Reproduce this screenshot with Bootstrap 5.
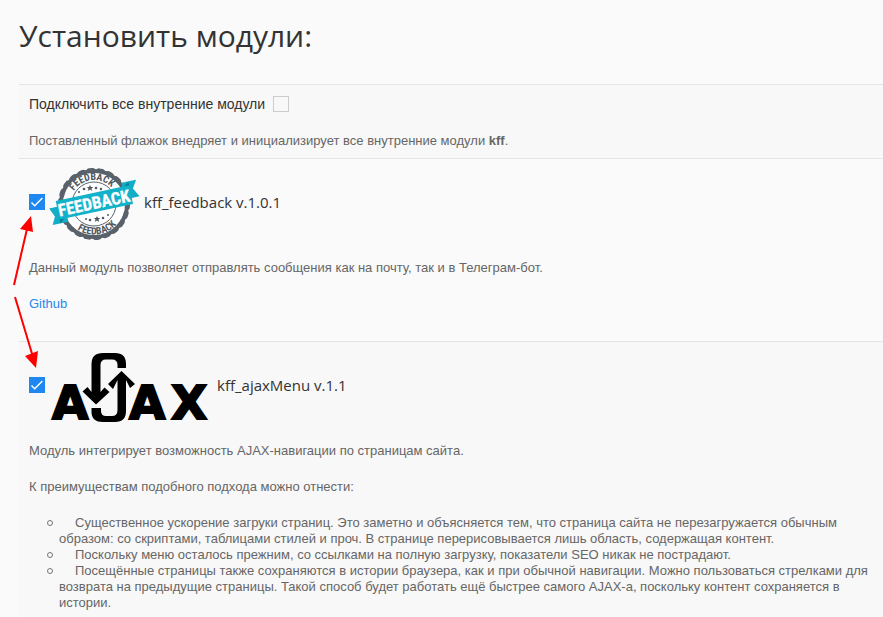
<!DOCTYPE html>
<html lang="ru">
<head>
<meta charset="utf-8">
<meta name="viewport" content="width=device-width, initial-scale=1">
<title>Установить модули</title>
<link href="https://cdn.jsdelivr.net/npm/bootstrap@5.3.0/dist/css/bootstrap.min.css" rel="stylesheet">
<style>
body { background: #fafafa; color: #666; font: 13px/16px "Liberation Sans", Arial, sans-serif; }
.page { padding: 14px 0 0 19px; overflow: hidden; }
h1 { font: 30px/44px "Open Sans", "Noto Sans", sans-serif; color: #333; margin: 0 0 26px; }
.module { border-top: 1px solid #e5e5e5; padding: 10px 10px 9px; }
.module:nth-child(odd) { background: #f8f8f8; }
.module p { margin: 0 0 20px; }
.module > :last-child { margin-bottom: 0; }
.module.with-link > :last-child { margin-bottom: 20px; }
.module label { color: #333; gap: 5px; margin-bottom: 26px; }
.module label svg { margin-bottom: -6px; overflow: visible; flex: none; }
.module .all-label { font-size: 14px; line-height: 18px; margin-bottom: 20px; gap: 8px; }
.module-name { font: 15px/20px "Open Sans", "Noto Sans", sans-serif; }
.form-check-input { width: 16px; height: 16px; margin: 0; border: 1px solid #ccc; background-color: transparent; flex: none; }
.form-check-input[type=checkbox] { border-radius: 0; }
.form-check-input:checked { background-color: #1e87f0; border-color: #1e87f0; }
.form-check-input:checked[type=checkbox] { background-image: url("data:image/svg+xml,%3Csvg xmlns='http://www.w3.org/2000/svg' viewBox='0 0 14 14'%3E%3Cpath d='M1.5 7.5l3.2 3.3L12.4 3' fill='none' stroke='white' stroke-width='1.4'/%3E%3C/svg%3E"); }
.module a { color: #1e87f0; text-decoration: none; }
.benefits { list-style: none; padding: 0 0 0 30px; }
.benefits li { text-indent: 16px; position: relative; }
.benefits li::before { content: ""; position: absolute; left: -12px; top: 5px; width: 6px; height: 6px; border: 1px solid #777; border-radius: 50%; }
.pointers { left: 0; top: 200px; pointer-events: none; }
.stamp-text { font-family: "Roboto Condensed", Roboto, sans-serif; font-weight: 700; }
.logo-text { font: 700 47px "DejaVu Sans", sans-serif; }
</style>
<script src="https://cdn.jsdelivr.net/npm/bootstrap@5.3.0/dist/js/bootstrap.bundle.min.js"></script>
</head>
<body>
<main class="page position-relative">
  <h1>Установить модули:</h1>
  <div>
    <section class="module">
      <label class="d-flex align-items-center all-label" for="all">Подключить все внутренние модули <input class="form-check-input" type="checkbox" id="all"></label>
      <p>Поставленный флажок внедряет и инициализирует все внутренние модули <b>kff</b>.</p>
    </section>
    <section class="module with-link">
      <label class="d-flex align-items-center" for="feedback">
        <input class="form-check-input" type="checkbox" id="feedback" checked>
        <svg width="89" height="71" viewBox="0 0 89 71" aria-hidden="true">
          <defs>
            <path id="arcTop" d="M20 35a24 24 0 0 1 48 0"/>
            <path id="arcBottom" d="M13.500 35a30.500 30.500 0 0 0 61 0"/>
          </defs>
          <circle cx="44" cy="35" r="33" fill="none" stroke="#59616a" stroke-width="4"/>
          <circle cx="44" cy="35" r="33" fill="none" stroke="#59616a" stroke-width="6" stroke-linecap="round" stroke-dasharray="3 6.425"/>
          <circle cx="44" cy="35" r="31" fill="#fff"/>
          <circle cx="44" cy="35" r="22" fill="none" stroke="#59616a" stroke-width="1"/>
          <g fill="#50585f" class="stamp-text" font-size="10" text-anchor="middle">
            <text><textPath href="#arcTop" startOffset="47%">FEEDBACK</textPath></text>
            <text><textPath href="#arcBottom" startOffset="54%">FEEDBACK</textPath></text>
          </g>
          <g fill="#50585f">
            <path id="star" d="M40 16l1 2.100h2.300l-1.800 1.500.7 2.300-2.200-1.300-2.200 1.300.7-2.300-1.800-1.500H39z"/>
            <use href="#star" x="7" y="31"/>
            <circle cx="34" cy="20" r="1.300"/><circle cx="46" cy="19" r="1.300"/><circle cx="51" cy="20" r="1.200"/><circle cx="29" cy="23" r="1"/>
            <circle cx="40" cy="51" r="1.300"/><circle cx="53" cy="49" r="1.300"/><circle cx="36" cy="50" r="1"/><circle cx="58" cy="46" r="1"/>
          </g>
          <g transform="rotate(-12 44 34)">
            <path d="M-1 30h16v17H-1l4-8zM75 20h15l-5 8 5 9H75z" fill="#14adc6"/>
            <path d="M7 42v5l6-5zM82 25v-5l-6 5z" fill="#087f96"/>
            <path d="M7 24h75v19H7z" fill="#14b1ca"/>
            <text class="stamp-text" x="44" y="40" font-size="17" text-anchor="middle" fill="#fff" stroke="#fff" stroke-width=".3">FEEDBACK</text>
          </g>
        </svg>
        <span class="module-name">kff_feedback v.1.0.1</span>
      </label>
      <p>Данный модуль позволяет отправлять сообщения как на почту, так и в Телеграм-бот.</p>
      <p><a href="#">Github</a></p>
    </section>
    <section class="module">
      <label class="d-flex align-items-center" for="ajax">
        <input class="form-check-input" type="checkbox" id="ajax" checked>
        <svg width="162" height="71" viewBox="0 0 162 71" aria-hidden="true">
          <g class="logo-text" stroke="#000" stroke-width="2">
            <text x="2" y="67">A</text><text x="79" y="67">A</text><text x="121" y="67">X</text>
          </g>
          <g stroke="#f8f8f8" stroke-width="1" paint-order="stroke">
            <path d="M67.500 28V58Q67.500 64 62 64H56Q51 64 51 59V56H41.500V60Q41.500 70 53 70H65Q76 70 76 59V28L80 36 85 32 71.500 19 58 32 63 37z"/>
            <path d="M41.500 40V12Q41.500 1 53 1H65Q76 1 76 12V16H67.500V13Q67.500 7.500 62 7.500H56Q50.500 7.500 50.500 13V40L54.500 35.500 59.500 40 46 52.500 32.500 39.500 37.500 35z"/>
          </g>
        </svg>
        <span class="module-name">kff_ajaxMenu v.1.1</span>
      </label>
      <p>Модуль интегрирует возможность AJAX-навигации по страницам сайта.</p>
      <p>К преимуществам подобного подхода можно отнести:</p>
      <ul class="benefits">
        <li>Существенное ускорение загруки страниц. Это заметно и объясняется тем, что страница сайта не перезагружается обычным образом: со скриптами, таблицами стилей и проч. В странице перерисовывается лишь область, содержащая контент.</li>
        <li>Поскольку меню осталось прежним, со ссылками на полную загрузку, показатели SEO никак не пострадают.</li>
        <li>Посещённые страницы также сохраняются в истории браузера, как и при обычной навигации. Можно пользоваться стрелками для возврата на предыдущие страницы. Такой способ будет работать ещё быстрее самого AJAX-а, поскольку контент сохраняется в истории.</li>
      </ul>
    </section>
  </div>
  <svg class="pointers position-absolute" width="60" height="180" viewBox="0 0 60 180" aria-hidden="true">
    <path d="M14 85L27 29M15 97l18 60" stroke="#f00" stroke-width="2" fill="none"/>
    <path d="M31 16l2 16-13-3zM36 168l2-17-13 5z" fill="#f00"/>
  </svg>
</main>
</body>
</html>
